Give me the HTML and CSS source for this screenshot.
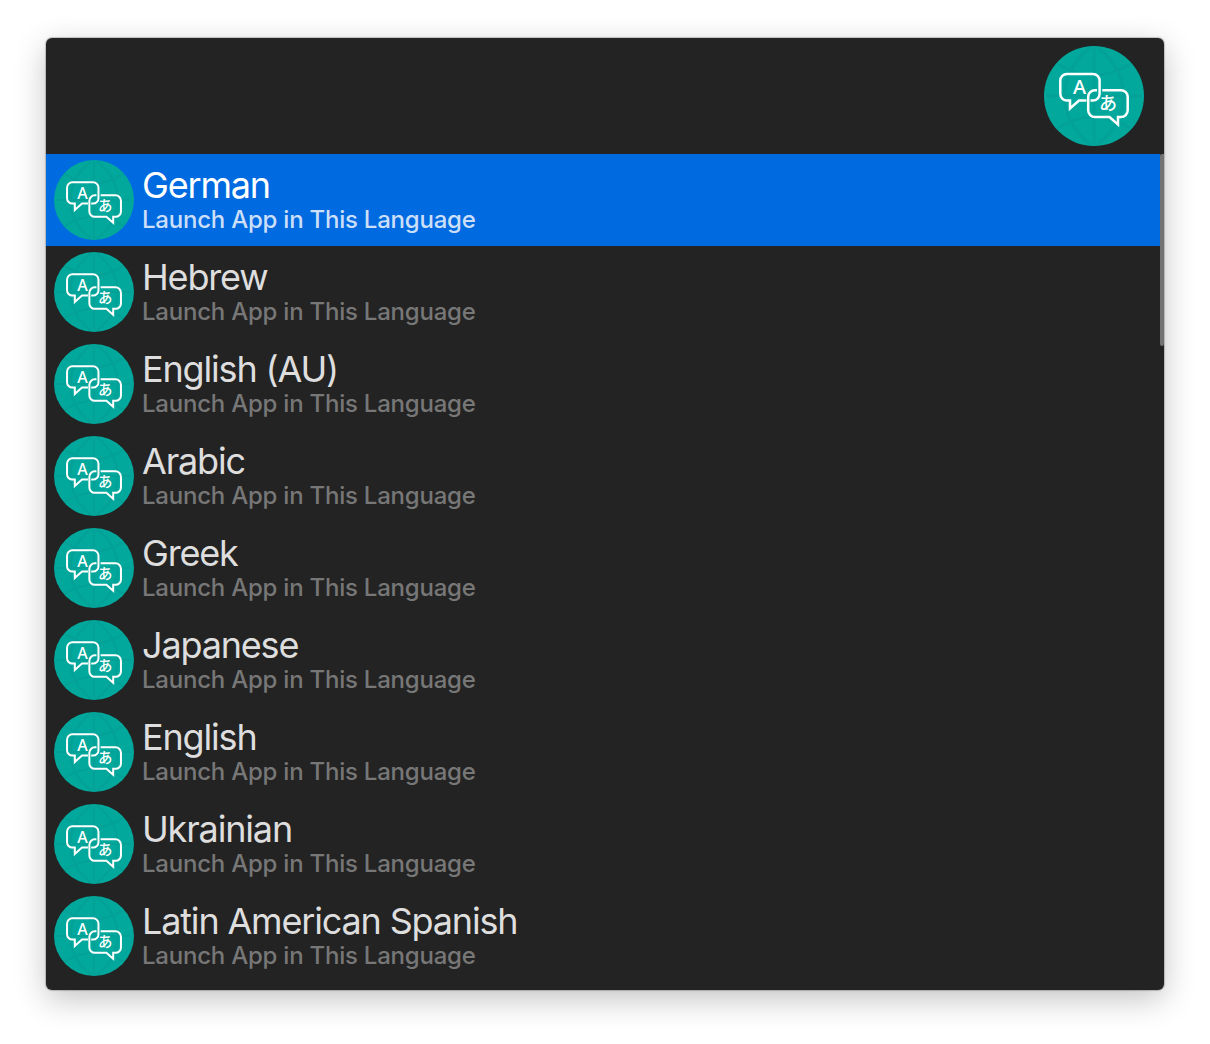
FILE: index.html
```
<!DOCTYPE html>
<html lang="en">
<head>
<meta charset="utf-8">
<title>Launcher</title>
<link rel="stylesheet" href="styles.css">
</head>
<body>
<svg class="defs" aria-hidden="true">
  <symbol id="lang" viewBox="0 0 100 100">
    <circle cx="50" cy="50" r="50" fill="#02a89b"/>
    <g fill="none" stroke="#03a197" stroke-width="2.6">
      <path d="M50 1V99M2 50H98M14 18Q50 40 86 18M14 82Q50 60 86 82M46 2C12 28 12 72 46 98M54 2C88 28 88 72 54 98"/>
    </g>
    <path class="bubble" d="M42.500 54.500H35L26 62.500V54.500H23A6.700 6.700 0 0 1 16.300 47.800V34.600A6.700 6.700 0 0 1 23 27.900H48.900A6.700 6.700 0 0 1 55.600 34.600V47.800A6.700 6.700 0 0 1 48.900 54.500H46.500"/>
    <path class="bubble" d="M53 44.200H50.900A6.700 6.700 0 0 0 44.200 50.900V64.300A6.700 6.700 0 0 0 50.900 71H65.500L74 78.500V71H77A6.700 6.700 0 0 0 83.700 64.300V50.900A6.700 6.700 0 0 0 77 44.200H58.300"/>
    <text class="latin" x="35.500" y="48.200">A</text>
    <text class="kana" x="64" y="63.800">あ</text>
  </symbol>
</svg>
<main class="panel">
  <header class="bar"><svg class="logo"><use href="#lang"/></svg></header>
  <ul class="list">
    <li class="row selected"><svg class="icon"><use href="#lang"/></svg><div><h2>German</h2><p>Launch App in This Language</p></div></li>
    <li class="row"><svg class="icon"><use href="#lang"/></svg><div><h2>Hebrew</h2><p>Launch App in This Language</p></div></li>
    <li class="row"><svg class="icon"><use href="#lang"/></svg><div><h2>English (AU)</h2><p>Launch App in This Language</p></div></li>
    <li class="row"><svg class="icon"><use href="#lang"/></svg><div><h2>Arabic</h2><p>Launch App in This Language</p></div></li>
    <li class="row"><svg class="icon"><use href="#lang"/></svg><div><h2>Greek</h2><p>Launch App in This Language</p></div></li>
    <li class="row"><svg class="icon"><use href="#lang"/></svg><div><h2>Japanese</h2><p>Launch App in This Language</p></div></li>
    <li class="row"><svg class="icon"><use href="#lang"/></svg><div><h2>English</h2><p>Launch App in This Language</p></div></li>
    <li class="row"><svg class="icon"><use href="#lang"/></svg><div><h2>Ukrainian</h2><p>Launch App in This Language</p></div></li>
    <li class="row"><svg class="icon"><use href="#lang"/></svg><div><h2>Latin American Spanish</h2><p>Launch App in This Language</p></div></li>
  </ul>
</main>
</body>
</html>
```
FILE: styles.css
```
* { box-sizing: border-box; margin: 0; padding: 0; }
body {
  height: 1044px;
  padding: 38px 46px;
  background: #fff;
  font-family: Inter, "Liberation Sans", sans-serif;
  overflow: hidden;
}
.defs { position: absolute; width: 0; height: 0; overflow: visible; }
.panel {
  width: 1118px;
  height: 952px;
  border-radius: 6px;
  background: #232323;
  box-shadow: 0 0 1px 1px rgba(0, 0, 0, .2), 0 9px 32px rgba(0, 0, 0, .24);
  overflow: hidden;
}
.bar {
  display: flex;
  justify-content: flex-end;
  height: 116px;
  padding: 8px 20px;
}
.logo { width: 100px; height: 100px; }
.list { position: relative; list-style: none; }
.list::after {
  content: "";
  position: absolute;
  top: 0;
  right: 0;
  width: 4px;
  height: 192px;
  border-radius: 2px 0 2px 2px;
  background: #737373;
}
.row {
  display: flex;
  gap: 8px;
  height: 92px;
  padding: 6px 8px;
  color: #dedede;
}
.row h2 {
  margin-top: 6px;
  font-size: 36px;
  font-weight: 440;
  line-height: 38px;
  letter-spacing: -1.17px;
  white-space: nowrap;
}
.row p {
  margin-top: 1px;
  color: #777;
  font-size: 24px;
  font-weight: 450;
  line-height: 30px;
  letter-spacing: -0.23px;
  white-space: nowrap;
}
.row.selected { background: linear-gradient(to right, #006ae0 1114px, #232323 1114px); color: #fff; }
.row.selected p { color: #ccdff8; }
.icon { width: 80px; height: 80px; flex: none; }
.bubble {
  fill: none;
  stroke: #fff;
  stroke-width: 2.5;
  stroke-linejoin: miter;
}
.latin, .kana { fill: #fff; text-anchor: middle; }
.latin { font: 500 20px "Noto Sans", sans-serif; }
.kana { font: 500 18px "Noto Sans CJK JP", sans-serif; }
```
